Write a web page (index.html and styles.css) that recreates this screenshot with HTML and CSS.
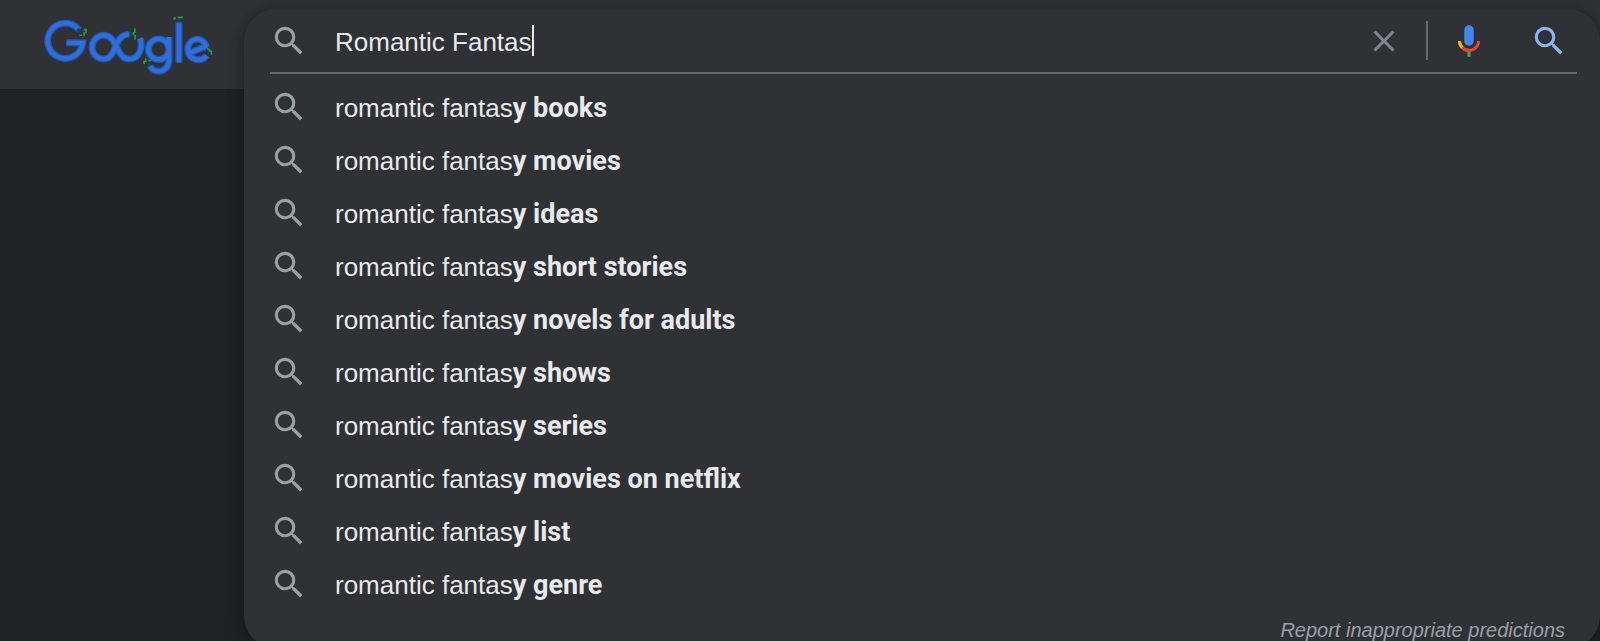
FILE: index.html
```
<!DOCTYPE html>
<html lang="en">
<head>
    <meta charset="UTF-8">
    <meta name="viewport" content="width=device-width, initial-scale=1.0">
    <title>Google Search</title>
    <link rel="stylesheet" href="styles.css">
</head>
<body>
    <svg class="defs" width="0" height="0" aria-hidden="true">
        <symbol id="magnifier" viewBox="0 0 24 24">
            <path d="M15.5 14h-.79l-.28-.27A6.471 6.471 0 0 0 16 9.5 6.5 6.5 0 1 0 9.5 16c1.61 0 3.09-.59 4.23-1.57l.27.28v.79l5 4.99L20.49 19l-4.99-5zm-6 0C7.01 14 5 11.99 5 9.5S7.01 5 9.5 5 14 7.01 14 9.5 11.99 14 9.5 14z"/>
        </symbol>
        <symbol id="snakes" viewBox="120 40 530 190">
            <path d="M236 88A53 53 0 1 0 247 127H198"/>
            <path d="M420 113C427 132 424 176 387 176C347 176 352 104 311 104A36 36 0 1 0 311 176C350 176 339 101 388 101"/>
            <path d="M507 146A31 31 0 1 0 445 146A31 31 0 1 0 507 146M507 109V179C507 218 461 222 450 196"/>
            <path d="M537 66V186"/>
            <path d="M568 158L619 137C609 105 564 111 564 147C564 180 606 187 621 165"/>
        </symbol>
    </svg>
    <div class="page">
        <header class="topbar"></header>
        <a class="logo" href="#" aria-label="Google">
            <svg viewBox="120 40 530 190" fill="none">
                <!-- dark edge first, lighter body on top -->
                <use href="#snakes" x="120" y="40" width="530" height="190" stroke="#2257b5" stroke-width="21"/>
                <use href="#snakes" x="120" y="40" width="530" height="190" stroke="#2f6fdd" stroke-width="13"/>
                <path stroke="#213a70" stroke-width="12" d="M231 86L240 94M389 100H397M444 187L450 197M537 56V66M622 142L628 148"/>
                <g stroke="#2b9c3c" stroke-width="5">
                    <path d="M237 104H245M250 87H260M257 87V99M251 94V107"/>
                    <path d="M404 84V97M400 94V104M405 103V117"/>
                    <path d="M437 174V185M432 181V191M445 181H453"/>
                    <path d="M520 54H528M533 50H549M525 49V56"/>
                    <path d="M622 143L632 150M627 150L637 156M635 150V162"/>
                </g>
            </svg>
        </a>
        <main class="panel">
            <form class="search" role="search">
                <svg class="icon"><use href="#magnifier"/></svg>
                <div class="field">
                    <input class="query" type="text" value="Romantic Fantas" aria-label="Search" autocomplete="off">
                    <span class="caret"></span>
                </div>
                <button class="tool clear" type="button" aria-label="Clear">
                    <svg viewBox="0 0 24 24"><path d="M19 6.41L17.59 5 12 10.59 6.41 5 5 6.41 10.59 12 5 17.59 6.41 19 12 13.41 17.59 19 19 17.59 13.41 12z"/></svg>
                </button>
                <span class="divider"></span>
                <button class="tool mic" type="button" aria-label="Search by voice">
                    <svg viewBox="0 0 24 24">
                        <path fill="#4285f4" d="M12 15c1.66 0 3-1.31 3-2.97V5.01C15 3.35 13.66 2 12 2S9 3.34 9 5.01v7.02C9 13.69 10.34 15 12 15z"/>
                        <path fill="#34a853" d="M11 18.08h2V22h-2z"/>
                        <path fill="#fbbc05" d="M7.05 16.87C5.78 15.54 5 14.04 5 12h2c0 1.45.56 2.42 1.47 3.38v.32l-1.15 1.18z"/>
                        <path fill="#ea4335" d="M12 16.93a4.97 5.25 0 0 1-3.54-1.55l-1.41 1.49C8.31 18.21 10.07 19 12 19c3.87 0 6.99-2.92 6.99-7H17c0 2.92-2.24 4.93-5 4.93z"/>
                    </svg>
                </button>
                <button class="tool go" type="submit" aria-label="Google Search">
                    <svg><use href="#magnifier"/></svg>
                </button>
            </form>
            <ul class="suggestions">
                <li><a href="#"><svg class="icon"><use href="#magnifier"/></svg><span>romantic fantas<b>y books</b></span></a></li>
                <li><a href="#"><svg class="icon"><use href="#magnifier"/></svg><span>romantic fantas<b>y movies</b></span></a></li>
                <li><a href="#"><svg class="icon"><use href="#magnifier"/></svg><span>romantic fantas<b>y ideas</b></span></a></li>
                <li><a href="#"><svg class="icon"><use href="#magnifier"/></svg><span>romantic fantas<b>y short stories</b></span></a></li>
                <li><a href="#"><svg class="icon"><use href="#magnifier"/></svg><span>romantic fantas<b>y novels for adults</b></span></a></li>
                <li><a href="#"><svg class="icon"><use href="#magnifier"/></svg><span>romantic fantas<b>y shows</b></span></a></li>
                <li><a href="#"><svg class="icon"><use href="#magnifier"/></svg><span>romantic fantas<b>y series</b></span></a></li>
                <li><a href="#"><svg class="icon"><use href="#magnifier"/></svg><span>romantic fantas<b>y movies on netflix</b></span></a></li>
                <li><a href="#"><svg class="icon"><use href="#magnifier"/></svg><span>romantic fantas<b>y list</b></span></a></li>
                <li><a href="#"><svg class="icon"><use href="#magnifier"/></svg><span>romantic fantas<b>y genre</b></span></a></li>
            </ul>
            <a class="report" href="#">Report inappropriate predictions</a>
        </main>
    </div>
</body>
</html>
```
FILE: styles.css
```
* {
    box-sizing: border-box;
}
body {
    margin: 0;
    background: #202124;
    color: #e8eaed;
    font-family: "Liberation Sans", Arial, sans-serif;
    font-size: 26px;
}
.defs {
    position: absolute;
}
.page {
    display: grid;
    grid-template-columns: 244px 1fr;
    grid-template-rows: 89px auto;
    height: 100vh;
    overflow: hidden;
}
.topbar {
    grid-area: 1 / 1 / 2 / 3;
    background: #303134;
}
.logo {
    grid-area: 1 / 1;
    padding: 14px 0 0 40px;
}
.logo svg {
    display: block;
    width: 177px;
    height: 63px;
}
.panel {
    grid-area: 1 / 2 / 3 / 3;
    align-self: start;
    display: flex;
    flex-direction: column;
    margin-top: 9px;
    padding: 0 23px 6px 26px;
    background: #303134;
    border-radius: 32px;
    box-shadow: 0 2px 16px rgba(0, 0, 0, 0.4);
}
.icon {
    flex: none;
    width: 38px;
    height: 38px;
    fill: #9aa0a6;
}
.search {
    display: flex;
    align-items: center;
    height: 65px;
    padding-right: 9px;
    border-bottom: 2px solid #67686c;
}
.field {
    flex: 1;
    display: flex;
    align-items: center;
    margin-left: 27px;
}
.query {
    field-sizing: content;
    padding: 3px 0 0;
    border: 0;
    outline: 0;
    background: none;
    color: inherit;
    font: inherit;
}
.caret {
    width: 2px;
    height: 31px;
    background: #e8eaed;
}
.tool {
    display: flex;
    padding: 0;
    border: 0;
    background: none;
    cursor: pointer;
}
.tool svg {
    width: 38px;
    height: 38px;
}
.clear {
    fill: #80868b;
}
.clear svg {
    width: 36px;
    height: 36px;
}
.divider {
    width: 2px;
    height: 39px;
    margin: 0 22px 0 24px;
    background: #67686c;
}
.go {
    margin-left: 42px;
    fill: #8ab4f8;
}
.suggestions {
    margin: 0;
    padding: 6px 0 8px;
    list-style: none;
}
.suggestions a {
    display: flex;
    align-items: center;
    gap: 27px;
    height: 53px;
    color: inherit;
    text-decoration: none;
}
.suggestions span {
    padding-top: 2px;
}
.suggestions b {
    font-family: Roboto, sans-serif;
    font-size: 27px;
    font-weight: 700;
}
.report {
    align-self: flex-end;
    padding-right: 12px;
    color: #9aa0a6;
    font-size: 20px;
    font-style: italic;
    line-height: 24px;
    text-decoration: none;
}
```
